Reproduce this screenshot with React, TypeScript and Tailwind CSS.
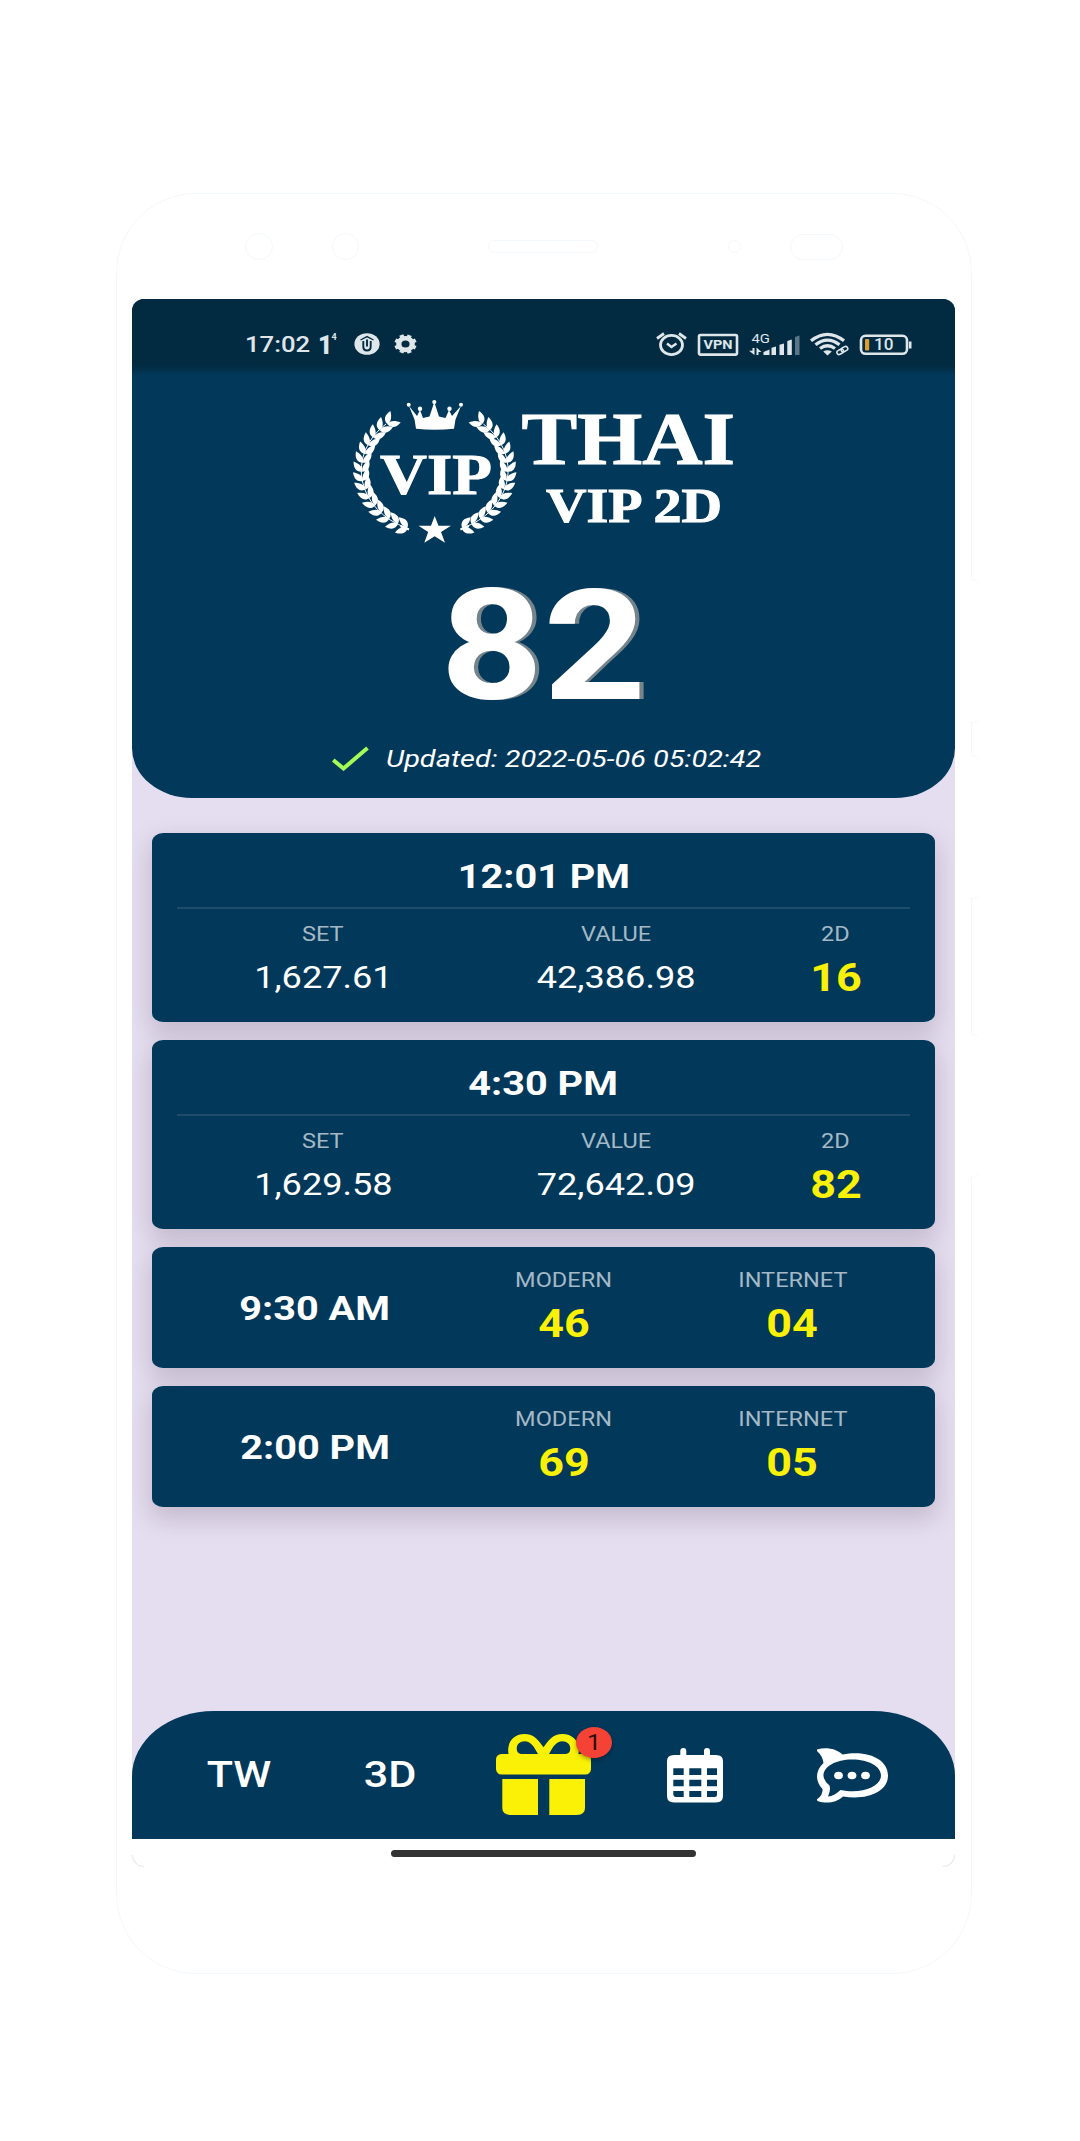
import React from "react";

type TextProps = { children: React.ReactNode; className?: string };

function Wide({ children, className = "" }: TextProps) {
  return <span className={`inline-block whitespace-nowrap scale-x-[1.166] ${className}`}>{children}</span>;
}

function Laurel() {
  const leaves: React.ReactNode[] = [];
  const n = 15;
  for (let i = 0; i < n; i++) {
    const a = ((112 + (i * 117) / (n - 1)) * Math.PI) / 180;
    const x = 94.5 + 72 * Math.cos(a);
    const y = 85.5 + 61.5 * Math.sin(a);
    const dir = (Math.atan2(62 * Math.cos(a), -73 * Math.sin(a)) * 180) / Math.PI;
    leaves.push(
      <path key={`o${i}`} d="M0 0C3-5 8-5.2 13.5-.5C8 2.8 3 3 0 0Z" transform={`translate(${x} ${y}) rotate(${dir - 38})`} />,
      <path key={`i${i}`} d="M0 0C3 5 8 5.2 13.5 .5C8-2.8 3-3 0 0Z" transform={`translate(${x} ${y}) rotate(${dir + 28})`} />,
    );
  }
  return (
    <g fill="#fff">
      {leaves}
      <path d="M69 144.500 60.500 141" stroke="#fff" strokeWidth="2" />
      <path d="M67 143A73 62 0 0 1 46 39" fill="none" stroke="#fff" strokeWidth="1" />
    </g>
  );
}

function Logo() {
  return (
    <svg className="block h-[170px] w-[400px]" viewBox="0 0 400 170">
      <Laurel />
      <g transform="translate(189.4 0) scale(-1 1)">
        <Laurel />
      </g>
      <g fill="#fff" transform="translate(0 0.5)">
        <path d="M76 43.2 74.5 34 69 20.5 77 30.5 80 24.5 83 32.5 89.5 31 94.3 16.5 99 31 105.5 32.5 109 24.5 112 30.5 121 20.5 115.5 34 114 43.2Q95 45.5 76 43.2Z" />
        <circle cx="68.7" cy="19.2" r="2" />
        <circle cx="80" cy="23.3" r="2.2" />
        <circle cx="94.3" cy="16.6" r="2.1" />
        <circle cx="109.5" cy="23.3" r="2.2" />
        <circle cx="121" cy="19.2" r="2" />
        <path d="M94.7 130.5 98.5 140.2 111 140.2 101 146.5 105 157.3 94.7 150.8 84.3 157.3 88.2 146.5 78.5 140.2 91 140.2Z" />
      </g>
      <g fill="#fff" stroke="#fff" strokeWidth="1" fontFamily="'Liberation Serif', serif" fontWeight="700">
        <text x="40" y="109.300" fontSize="57" textLength="112" lengthAdjust="spacingAndGlyphs">VIP</text>
        <text x="181.500" y="79.200" fontSize="73.5" textLength="213.5" lengthAdjust="spacingAndGlyphs">THAI</text>
        <text x="206" y="136.500" fontSize="48" textLength="176" lengthAdjust="spacingAndGlyphs">VIP 2D</text>
      </g>
    </svg>
  );
}

function StatusLeft() {
  return (
    <div className="flex items-center">
      <Wide className="w-[54px] origin-left text-[22px] font-medium leading-[33px]">17:02</Wide>
      <div className="ml-[19px] flex h-[22px] items-start">
        <span className="text-[25px] font-black leading-[25px]">1</span>
        <span className="-ml-[1px] text-[9px] font-bold leading-[9px]">4</span>
      </div>
      <svg className="ml-[17px] h-[22px] w-[26px]" viewBox="0 0 26 22">
        <ellipse cx="13" cy="11" rx="12.6" ry="10.8" fill="#dfe6ea" />
        <path d="M6.5 7 13 3.6 19.500 7" fill="none" stroke="#022b42" strokeWidth="1.400" />
        <path d="M9.300 8V13.500Q9.300 17.500 13 17.500T16.700 13.500V8M13 6.500V13.500" fill="none" stroke="#022b42" strokeWidth="1.900" />
      </svg>
      <svg className="ml-[14px] h-[20px] w-[23px]" viewBox="0 0 24 24" preserveAspectRatio="none">
        <circle cx="12" cy="12" r="7" fill="none" stroke="#dfe6ea" strokeWidth="5.5" />
        <path d="M12 0.5V5M12 19V23.5M0.5 12H5M19 12H23.5M3.8 3.8 7 7M17 17 20.2 20.2M20.2 3.8 17 7M7 17 3.8 20.2" transform="rotate(22.5 12 12)" stroke="#dfe6ea" strokeWidth="4.6" />
      </svg>
    </div>
  );
}

function StatusRight() {
  return (
    <svg className="h-[30px] w-[262px]" viewBox="0 0 262 30" fill="none" stroke="#dfe6ea">
      <ellipse cx="17.5" cy="16" rx="11" ry="9.6" strokeWidth="2.8" />
      <path d="M13 14.5 17.5 18 22.5 14.5" strokeWidth="2.4" />
      <path d="M3 9.5 10 4.5M25 4.5 32 9.5" strokeWidth="2.8" />
      <rect x="45" y="6" width="38" height="19.6" rx="1.5" strokeWidth="2.6" />
      <g fill="#dfe6ea" stroke="none" fontFamily="Roboto, sans-serif">
        <text x="49.500" y="20" fontSize="12.6" fontWeight="700" textLength="29" lengthAdjust="spacingAndGlyphs">VPN</text>
        <text x="97.5" y="13.500" fontSize="13" textLength="18.500" lengthAdjust="spacingAndGlyphs">4G</text>
        <path d="M109.5 26V23L115.5 20.5V26ZM117.5 18.8 122 17.5V26H117.5ZM125.5 15.7 130 14.5V26H125.5ZM133.3 12 137.8 10.5V26H133.3Z" />
        <path d="M141 8 145.5 6.5V26H141Z" opacity=".4" />
        <path d="M98.5 19H100.5V26L95 21.7H98.5ZM102.5 26V18.5L107.5 23H104.5V26Z" />
      </g>
      <path d="M157 11.8Q173.5-1 190 11.8M161.5 15.8Q173.5 6.5 185.5 15.8M166 19.5Q173.5 14 181 19.5" strokeWidth="3.3" />
      <path d="M169.2 22.5Q173.5 20 177.8 22.5L173.5 26.5Z" fill="#dfe6ea" stroke="none" />
      <rect x="182.8" y="20.8" width="7" height="4.2" rx="2.1" transform="rotate(-28 186 23)" strokeWidth="1.5" />
      <rect x="186.8" y="18.3" width="7" height="4.2" rx="2.1" transform="rotate(-28 190 20)" strokeWidth="1.5" />
      <rect x="207" y="6.8" width="46" height="18" rx="4.5" strokeWidth="2.6" />
      <rect x="211" y="10" width="4.2" height="11.5" rx="1" fill="#dd9d33" stroke="none" />
      <path d="M256.2 12.5V19.5" strokeWidth="2.6" />
      <text x="220" y="21.2" fontSize="15.8" fontFamily="Roboto, sans-serif" fontWeight="500" fill="#dfe6ea" stroke="none" textLength="19.500" lengthAdjust="spacingAndGlyphs">10</text>
    </svg>
  );
}

function Label({ children }: TextProps) {
  return <Wide className="h-[24px] text-[20.2px] leading-[27px] text-[#a4b8c6]">{children}</Wide>;
}

function Hot({ children }: TextProps) {
  return <Wide className="h-[64px] text-[38.5px] font-bold leading-[66px] text-[#fbf106]">{children}</Wide>;
}

function Amount({ children }: TextProps) {
  return <Wide className="ml-px h-[64px] text-[31px] leading-[66px] text-white">{children}</Wide>;
}

function Time({ children }: TextProps) {
  return <Wide className="pt-[1px] text-[34px] font-bold leading-[40px] text-white">{children}</Wide>;
}

const cardClass = "rounded-[11px/9px] bg-[#02385a] shadow-[0_10px_24px_2px_rgba(80,60,80,0.22)]";

function SessionCard({ time, set, value, result }: { time: string; set: string; value: string; result: string }) {
  return (
    <section className={`flex h-[189px] flex-col px-[25px] ${cardClass}`}>
      <div className="mt-[10px] flex h-[66px] items-center justify-center border-b-2 border-[#1e4c6a]">
        <Time>{time}</Time>
      </div>
      <div className="-ml-px mr-px mt-[12px] flex text-center">
        <div className="flex flex-[2] flex-col items-center">
          <Label>SET</Label>
          <Amount>{set}</Amount>
        </div>
        <div className="flex flex-[2] flex-col items-center">
          <Label>VALUE</Label>
          <Amount>{value}</Amount>
        </div>
        <div className="flex flex-1 flex-col items-center">
          <Label>2D</Label>
          <Hot>{result}</Hot>
        </div>
      </div>
    </section>
  );
}

function PairCard({ time, modern, internet }: { time: string; modern: string; internet: string }) {
  return (
    <section className={`grid h-[121px] grid-cols-[276px_222px_235px] px-[25px] ${cardClass}`}>
      <div className="flex items-center justify-center">
        <Time>{time}</Time>
      </div>
      <div className="flex flex-col items-center pt-[20px]">
        <Label>MODERN</Label>
        <Hot>{modern}</Hot>
      </div>
      <div className="flex flex-col items-center pt-[20px]">
        <Label>INTERNET</Label>
        <Hot>{internet}</Hot>
      </div>
    </section>
  );
}

function GiftIcon() {
  return (
    <svg className="block h-[83px] w-[96px]" viewBox="0 0 96 83">
      <path fillRule="evenodd" fill="#fbf106" d="M12.7 22C10 9 18 1 28.5 1C38 1 42.5 7 47.5 14.3C52.5 7 57 1 66.5 1C77 1 85 9 82.3 22ZM21.5 19C19 13 23 8.3 28.5 8.3C35 8.3 38 14 42 21H25Q22.5 20.5 21.5 19ZM73.5 19C76 13 72 8.3 66.5 8.3C60 8.3 57 14 53 21H70Q72.500 20.500 73.500 19Z" />
      <rect x="0" y="21" width="95" height="20.500" rx="5.500" fill="#fbf106" />
      <path d="M6.300 46H42V82H14.500Q6.300 81.500 6.300 75ZM53.300 46H89V75Q89 81.500 81 82H53.300Z" fill="#fbf106" />
    </svg>
  );
}

function CalendarIcon() {
  return (
    <svg className="block h-[55px] w-[56px]" viewBox="0 0 56 55">
      <path fillRule="evenodd" fill="#fff" d="M7 7H13.300V3A3 3 0 0 1 19.300 3V7H37V3A3 3 0 0 1 43 3V7H49Q56 7 56 13V48Q56 54.500 49 54.500H7Q0 54.500 0 48V13Q0 7 7 7ZM6.300 20.300V27H16.700V20.300ZM22.300 20.300V27H34.300V20.300ZM40 20.300V27H50V20.300ZM6.300 31.700V38.300H16.700V31.700ZM22.300 31.700V38.300H34.300V31.700ZM40 31.700V38.300H50V31.700ZM6.300 43V46.500Q6.500 49 9 49H16.700V43ZM22.300 43V49H34.300V43ZM40 43V49H47.500Q50 49 50 46.500V43Z" />
    </svg>
  );
}

function ChatIcon() {
  return (
    <svg className="block h-[55px] w-[71px]" viewBox="0 0 71 55">
      <path fillRule="evenodd" fill="#fff" d="M0 1.500C9-1 19 .5 25.500 6.500C52 1.500 71 12 71 27.500C71 43 52 52.500 26 48.500C19 55 9 56 .5 53Q-1 51.500 1 50.500Q6 46.500 5.500 41C-2 33 -2 23 6.500 15Q5.500 8 .5 3.500Q-1 2.300 0 1.500ZM35 11.500C19 11.500 6.500 18.500 6.500 27.500Q6.500 32.500 12.500 37.500Q14 42 11 48.500Q17 48 23.500 42C45 46.500 64 38.500 64 27.500C64 18.500 52 11.500 35 11.500Z" />
      <ellipse cx="21.500" cy="27.500" rx="4.400" ry="3.800" fill="#fff" />
      <ellipse cx="35" cy="27.500" rx="4.400" ry="3.800" fill="#fff" />
      <ellipse cx="48.500" cy="27.500" rx="4.400" ry="3.800" fill="#fff" />
    </svg>
  );
}

export default function App() {
  return (
    <main className="h-[2141px] w-[1080px] overflow-hidden bg-white pl-[116px] pt-[193px] font-['Roboto',sans-serif]">
      <div className="relative h-[1781px] w-[856px] rounded-[80px] border border-[#f3f8fd]">
        <div className="flex h-[105px] items-center">
          <div className="ml-[128px] h-[27px] w-[28px] rounded-full border border-[#f3f8fd]" />
          <div className="ml-[59px] h-[27px] w-[27px] rounded-full border border-[#f3f8fd]" />
          <div className="ml-[129px] h-[13px] w-[110px] rounded-full border border-[#f3f8fd]" />
          <div className="ml-[130px] h-[13px] w-[13px] rounded-full border border-[#f3f8fd]" />
          <div className="ml-[49px] h-[26px] w-[53px] rounded-full border border-[#f3f8fd]" />
        </div>

        <div className="ml-[15px] flex h-[1568px] w-[823px] flex-col overflow-hidden rounded-[12px] bg-[#e5def0]">
          <header className="flex h-[499px] shrink-0 flex-col rounded-b-[60px_50px] bg-[#02385a]">
            <div className="flex h-[76px] shrink-0 items-center justify-between bg-gradient-to-b from-[#022b42] from-[88%] to-[#02385a] pl-[113px] pr-[39px] pt-[14px] text-[#dfe6ea]">
              <StatusLeft />
              <StatusRight />
            </div>
            <div className="mt-[10px] pl-[208px]">
              <Logo />
            </div>
            <div className="mt-[2px] flex h-[179px] items-center justify-center">
              <Wide className="text-[154px] font-bold leading-[178px] text-white [text-shadow:3.5px_0_0_#75838b]">82</Wide>
            </div>
            <div className="mt-[7px] flex h-[30px] items-center pl-[200px]">
              <svg className="h-[26px] w-[37px]" viewBox="0 0 37 26" fill="none">
                <path d="M1.200 15 11.500 23.500 35.500 3" stroke="#a5fb56" strokeWidth="4" />
              </svg>
              <Wide className="ml-[17px] origin-left text-[24.750px] italic leading-[31px] text-white">Updated: 2022-05-06 05:02:42</Wide>
            </div>
          </header>

          <div className="flex flex-1 flex-col gap-[18px] px-[20px] pt-[35px]">
            <SessionCard time="12:01 PM" set="1,627.61" value="42,386.98" result="16" />
            <SessionCard time="4:30 PM" set="1,629.58" value="72,642.09" result="82" />
            <PairCard time="9:30 AM" modern="46" internet="04" />
            <PairCard time="2:00 PM" modern="69" internet="05" />
          </div>

          <nav className="flex h-[128px] shrink-0 items-start rounded-t-[82px_65px] bg-[#02385a] text-[37px] font-medium text-white">
            <Wide className="ml-[79px] mt-[42px] w-[56px] text-center leading-[44px]">TW</Wide>
            <Wide className="ml-[95px] mt-[42px] w-[56px] text-center leading-[44px]">3D</Wide>
            <div className="relative ml-[78px] mt-[22px]">
              <GiftIcon />
              <div className="absolute left-[80px] top-[-6px] flex h-[31px] w-[36px] items-center justify-center rounded-[50%] bg-[#f44336] shadow-[0_2px_4px_rgba(0,0,0,0.35)]">
                <Wide className="text-[21.500px] font-normal leading-[31px] text-[#2b0d0b]">1</Wide>
              </div>
            </div>
            <div className="ml-[75px] mt-[37px]">
              <CalendarIcon />
            </div>
            <div className="ml-[94px] mt-[37px]">
              <ChatIcon />
            </div>
          </nav>
          <div className="flex h-[28px] shrink-0 items-end justify-between bg-white">
            <div className="h-[12px] w-[12px] rounded-bl-[12px] border-b border-l border-[#e6e6e6]" />
            <div className="mb-[10px] h-[7px] w-[305px] rounded-full bg-[#333]" />
            <div className="h-[12px] w-[12px] rounded-br-[12px] border-b border-r border-[#e6e6e6]" />
          </div>
        </div>

        <div className="absolute left-[854px] top-[385px] h-[144px] w-[9px] rounded-r-[8px] border-y border-[#f3f8fd] bg-white" />
        <div className="absolute left-[854px] top-[561px] h-[144px] w-[9px] rounded-r-[8px] border-y border-[#f3f8fd] bg-white" />
        <div className="absolute left-[854px] top-[840px] h-[144px] w-[9px] rounded-r-[8px] border-y border-[#f3f8fd] bg-white" />
      </div>
    </main>
  );
}
